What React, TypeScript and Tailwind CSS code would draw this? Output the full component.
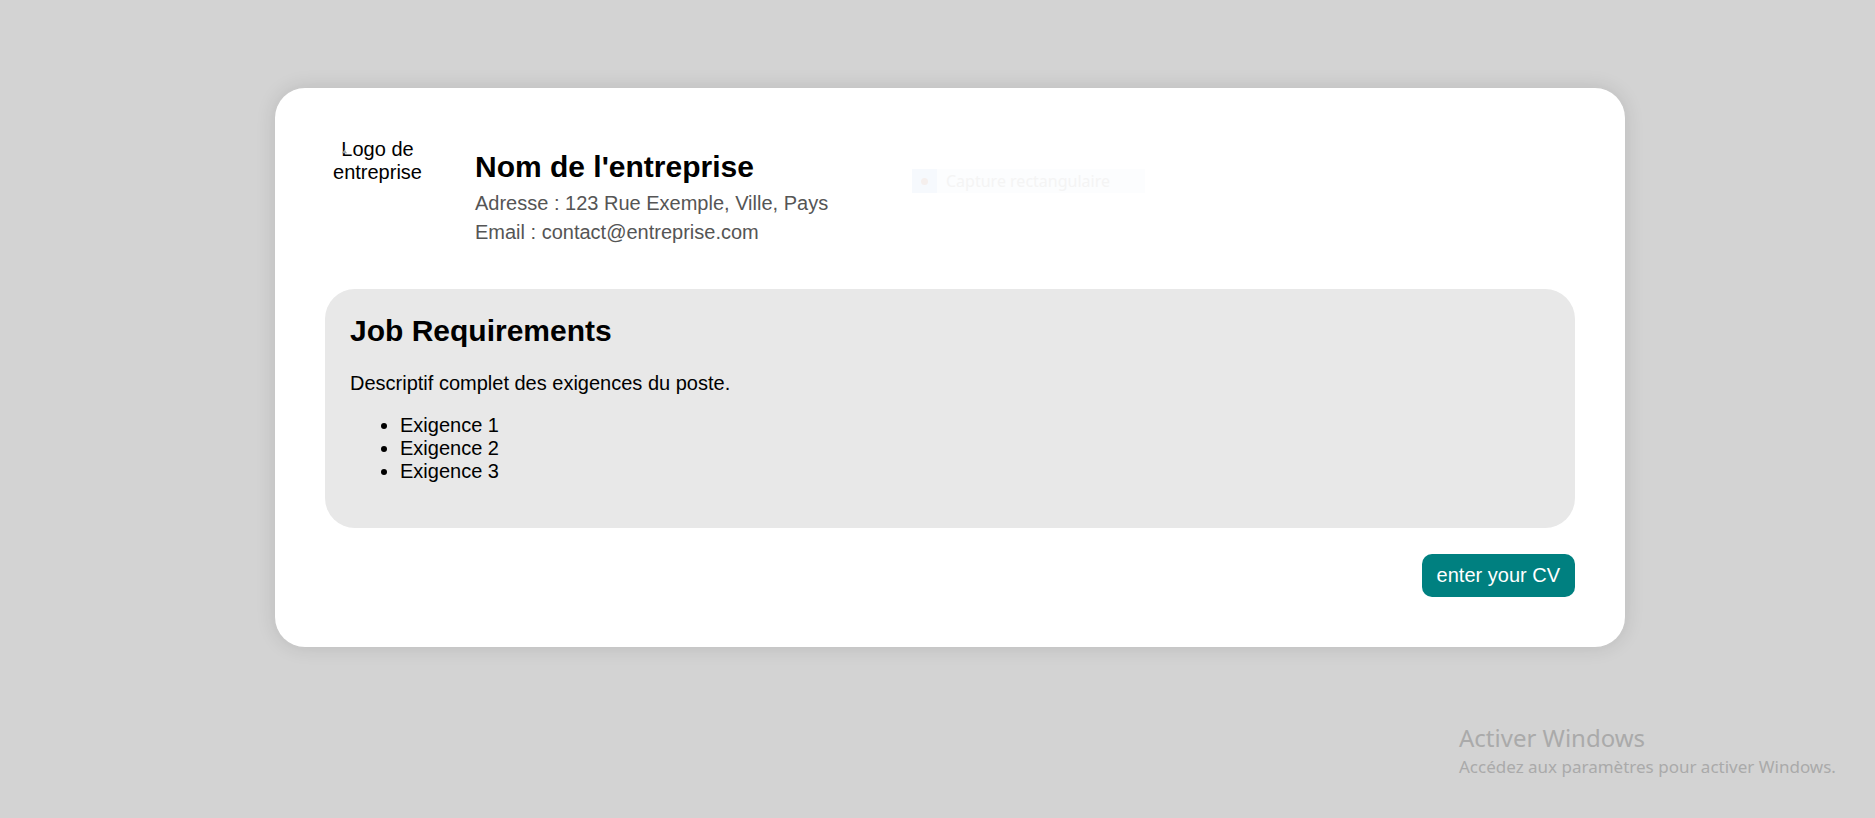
import React from 'react';

function BrokenImageIcon() {
  return (
    <svg className="absolute left-[16px] top-[9px] w-[7px] h-[7px]" viewBox="0 0 8 8">
      <path d="M1 7 L4 3 L7 7 Z" fill="#9aa3ab" />
    </svg>
  );
}

export default function App() {
  const requirements = ['Exigence 1', 'Exigence 2', 'Exigence 3'];

  return (
    <main className="relative min-h-screen overflow-hidden bg-[#d3d3d3] font-['Liberation_Sans',Arial,sans-serif] text-black">
      <div className="pt-[88px]">
        <div className="ml-[275px] w-[1350px] rounded-[30px] bg-white p-[50px] shadow-[0_0_20px_rgba(0,0,0,0.12)]">
          <header className="flex items-start">
            <div className="relative mr-[48px] h-[100px] w-[102px] shrink-0 pl-[3px] text-center text-[20px] leading-[23px]">
              <BrokenImageIcon />
              Logo de entreprise
            </div>
            <div className="mt-[12px]">
              <h2 className="text-[30px] font-bold leading-[34.5px]">Nom de l'entreprise</h2>
              <p className="mt-[7px] text-[20px] leading-[23px] text-[#555]">Adresse : 123 Rue Exemple, Ville, Pays</p>
              <p className="mt-[6px] text-[20px] leading-[23px] text-[#555]">Email : contact@entreprise.com</p>
            </div>
          </header>

          <section className="mt-[45px] rounded-[30px] bg-[#e8e8e8] p-[25px]">
            <h2 className="mb-[24px] text-[30px] font-bold leading-[34.5px]">Job Requirements</h2>
            <p className="mb-[19px] text-[20px] leading-[23px]">Descriptif complet des exigences du poste.</p>
            <ul className="mb-[20px] list-disc pl-[50px] text-[20px] leading-[23px]">
              {requirements.map((item) => (
                <li key={item}>{item}</li>
              ))}
            </ul>
          </section>

          <div className="mt-[26px] flex justify-end">
            <button className="rounded-[10px] bg-[#008080] px-[15px] py-[10px] text-[20px] leading-[23px] text-white">
              enter your CV
            </button>
          </div>
        </div>
      </div>

      {/* faint snipping-tool hint over the card */}
      <div className="absolute left-[912px] top-[169px] flex h-[24px] w-[233px] items-center bg-[#fcfdfe]">
        <div className="flex h-full w-[25px] items-center justify-center bg-[#f6f9fd]">
          <span className="h-[7px] w-[7px] rounded-full bg-[#f5efed]" />
        </div>
        <span className="ml-[9px] font-['Noto_Sans',sans-serif] text-[16px] text-[#f4f4f4]">Capture rectangulaire</span>
      </div>

      {/* windows activation watermark */}
      <div className="absolute left-[1459px] top-[722px] font-['Noto_Sans',sans-serif] text-[#aaaaaa]">
        <div className="text-[24px] leading-[32px]">Activer Windows</div>
        <div className="text-[17px] leading-[26px]">Accédez aux paramètres pour activer Windows.</div>
      </div>
    </main>
  );
}
